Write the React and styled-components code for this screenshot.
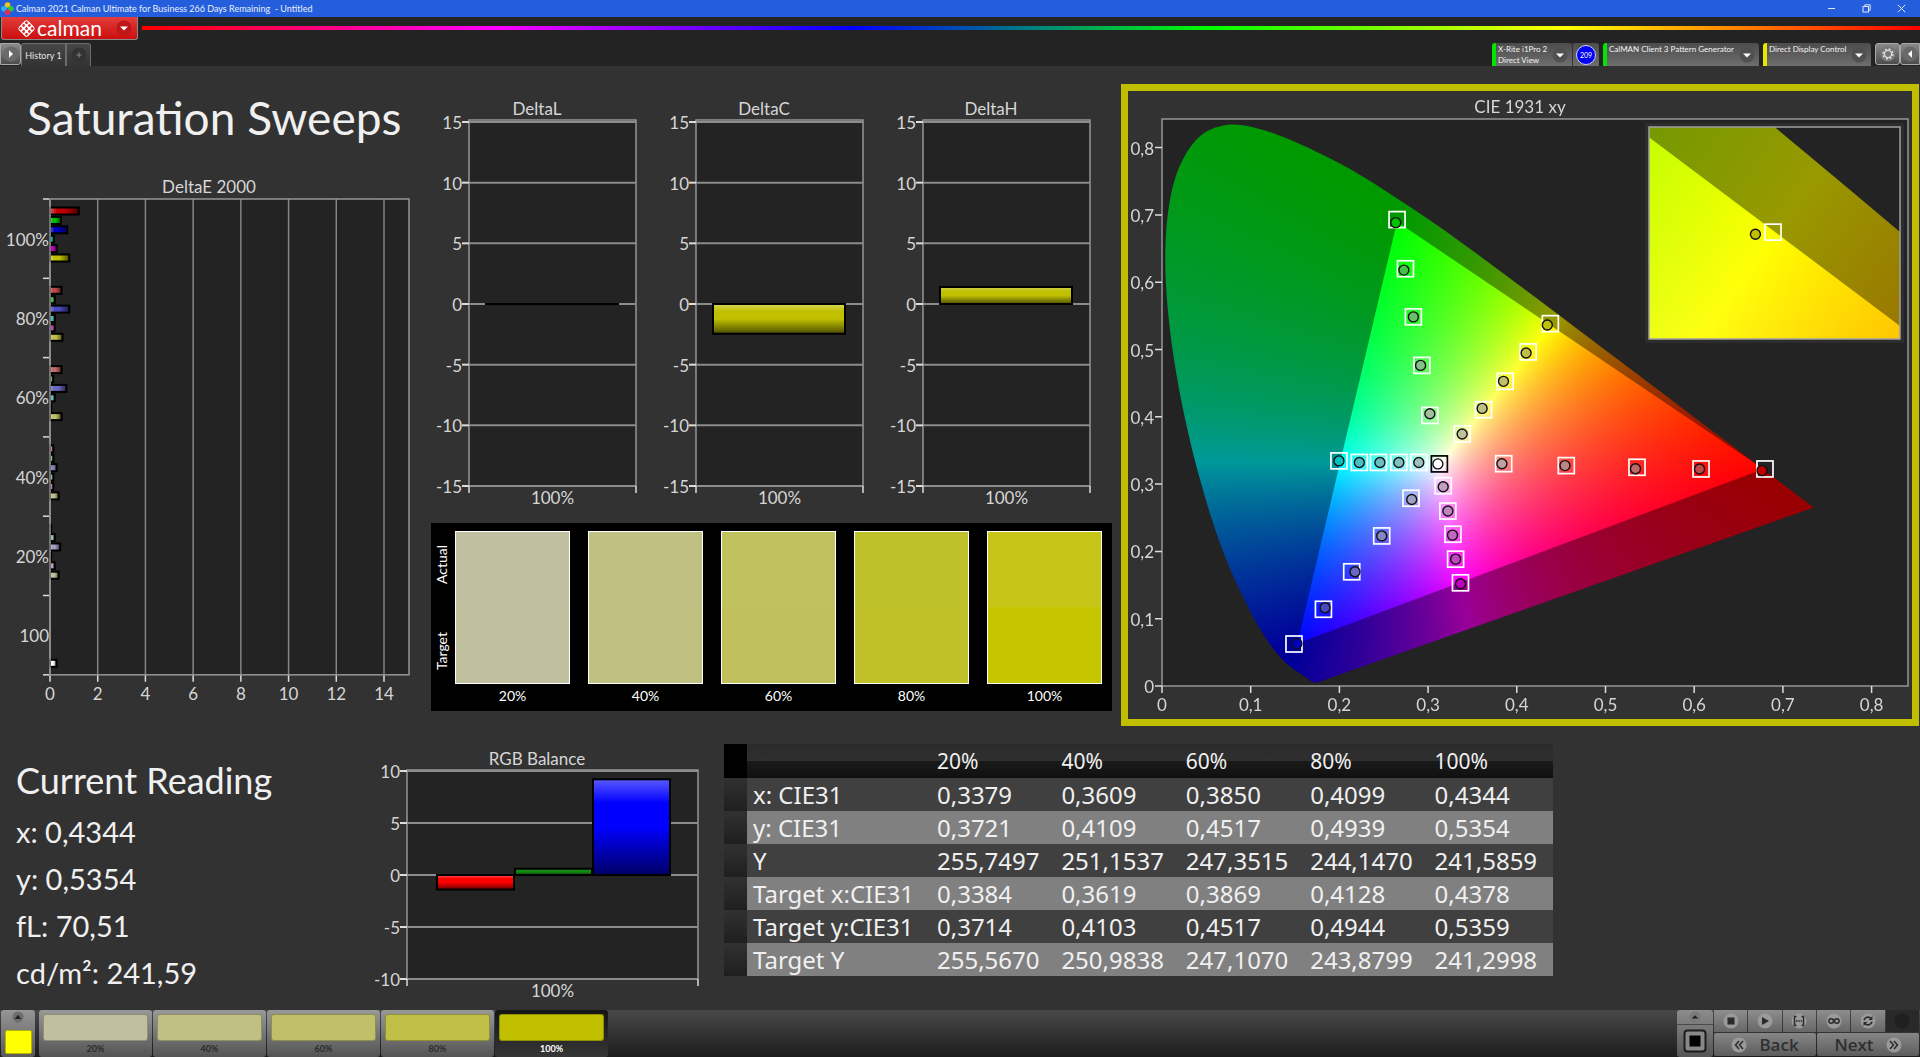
import React, { useLayoutEffect, useRef } from "react"
import styled, { createGlobalStyle } from "styled-components"

const GlobalStyle = createGlobalStyle`
  * {
    box-sizing: border-box;
  }
  body {
    margin: 0;
    background: #323232;
    color: #f0f0f0;
    font-family: Lato, "Liberation Sans", sans-serif;
  }
  button {
    margin: 0;
    padding: 0;
    border: none;
    background: none;
    color: inherit;
    font: inherit;
    cursor: pointer;
  }
`

/* ---------- data ---------- */

const LEVELS = ["20%", "40%", "60%", "80%", "100%"]
const PATCHES = ["#c0c0a0", "#c0c085", "#c0c068", "#c0c048", "#c0c000"]

const SWATCHES = [
  { label: "20%", actual: "#c0c0a0", target: "#c0c09f" },
  { label: "40%", actual: "#c0c083", target: "#c0c081" },
  { label: "60%", actual: "#c0c15f", target: "#c0c05d" },
  { label: "80%", actual: "#bfc12b", target: "#c0c128" },
  { label: "100%", actual: "#c6c518", target: "#c5c500" },
]

const TABLE_ROWS = [
  ["x: CIE31", "0,3379", "0,3609", "0,3850", "0,4099", "0,4344"],
  ["y: CIE31", "0,3721", "0,4109", "0,4517", "0,4939", "0,5354"],
  ["Y", "255,7497", "251,1537", "247,3515", "244,1470", "241,5859"],
  ["Target x:CIE31", "0,3384", "0,3619", "0,3869", "0,4128", "0,4378"],
  ["Target y:CIE31", "0,3714", "0,4103", "0,4517", "0,4944", "0,5359"],
  ["Target Y", "255,5670", "250,9838", "247,1070", "243,8799", "241,2998"],
]

const READINGS = ["x: 0,4344", "y: 0,5354", "fL: 70,51", "cd/m²: 241,59"]

const HUES = {
  red: [1, 0, 0],
  green: [0, 1, 0],
  blue: [0, 0, 1],
  cyan: [0, 1, 1],
  magenta: [1, 0, 1],
  yellow: [1, 1, 0],
}

// channel value of the absent primaries for 20% .. 100%
const LOW = [160, 133, 104, 72, 0]

const hueColor = (hue, level) =>
  `rgb(${HUES[hue].map((on) => (on ? 192 : LOW[level])).join(",")})`

// DeltaE per level, from 100% down to 20%, in the order of HUES
const DELTA_E = [
  { label: "100%", level: 4, values: [1.2, 0.46, 0.72, 0.16, 0.28, 0.8] },
  { label: "80%", level: 3, values: [0.48, 0.2, 0.8, 0.2, 0.2, 0.52] },
  { label: "60%", level: 2, values: [0.48, 0.13, 0.68, 0.2, 0.05, 0.48] },
  { label: "40%", level: 1, values: [0.14, 0.14, 0.28, 0.14, 0.14, 0.36] },
  { label: "20%", level: 0, values: [0.05, 0.2, 0.42, 0.05, 0.2, 0.36] },
]

// [target x, target y, actual x, actual y] for 20% .. 100%
const SWEEPS = {
  red: [
    [0.3852, 0.3303, 0.3832, 0.3303],
    [0.4558, 0.3275, 0.4543, 0.3275],
    [0.5355, 0.325, 0.5338, 0.3228],
    [0.6077, 0.3225, 0.606, 0.3225],
    [0.6798, 0.3225, 0.6765, 0.32],
  ],
  green: [
    [0.302, 0.402, 0.302, 0.4045],
    [0.293, 0.4764, 0.2915, 0.4764],
    [0.2834, 0.5485, 0.2834, 0.5485],
    [0.2745, 0.62, 0.2727, 0.618],
    [0.265, 0.693, 0.2635, 0.6885],
  ],
  blue: [
    [0.2807, 0.279, 0.2815, 0.2772],
    [0.2477, 0.223, 0.2477, 0.223],
    [0.2139, 0.1697, 0.2176, 0.1697],
    [0.182, 0.114, 0.1838, 0.1163],
    [0.1488, 0.0624, 0.152, 0.063],
  ],
  cyan: [
    [0.2895, 0.3322, 0.2895, 0.3322],
    [0.267, 0.3322, 0.267, 0.3322],
    [0.244, 0.3322, 0.2457, 0.3322],
    [0.2225, 0.3322, 0.2225, 0.3322],
    [0.1995, 0.3345, 0.1995, 0.3345],
  ],
  magenta: [
    [0.317, 0.2976, 0.317, 0.296],
    [0.3223, 0.26, 0.3223, 0.26],
    [0.328, 0.2255, 0.3275, 0.2242],
    [0.331, 0.1885, 0.331, 0.1885],
    [0.3365, 0.1533, 0.3365, 0.152],
  ],
  yellow: [
    [0.3384, 0.3745, 0.3384, 0.3745],
    [0.3625, 0.4105, 0.3609, 0.4125],
    [0.3869, 0.4527, 0.385, 0.4527],
    [0.4128, 0.4964, 0.4105, 0.4949],
    [0.4378, 0.5384, 0.4344, 0.5364],
  ],
}

const LOCUS = [
  [0.1741, 0.005], [0.1714, 0.0051], [0.1689, 0.0069], [0.1644, 0.0109],
  [0.1566, 0.0177], [0.144, 0.0297], [0.1355, 0.0399], [0.1241, 0.0578],
  [0.1096, 0.0868], [0.0913, 0.1327], [0.0687, 0.2007], [0.0454, 0.295],
  [0.0235, 0.4127], [0.0082, 0.5384], [0.0039, 0.6548], [0.0139, 0.7502],
  [0.0389, 0.812], [0.0743, 0.8338], [0.1142, 0.8262], [0.1547, 0.8059],
  [0.1929, 0.7816], [0.2296, 0.7543], [0.3016, 0.6923], [0.3731, 0.6245],
  [0.4441, 0.5547], [0.5125, 0.4866], [0.5752, 0.4242], [0.627, 0.3725],
  [0.6658, 0.334], [0.6915, 0.3083], [0.719, 0.2809], [0.7347, 0.2653],
]

const GAMUT = [[0.265, 0.69], [0.678, 0.3225], [0.1525, 0.063]]

/* ---------- page frame ---------- */

const Page = styled.div`
  display: flex;
  flex-direction: column;
  min-height: 100vh;
`

const TitleBar = styled.header`
  display: flex;
  align-items: center;
  justify-content: space-between;
  height: 17px;
  padding: 0 12px 0 1px;
  background: #245edc;
  color: #e9effc;
  font-size: 9px;
  line-height: 17px;
`

const TitleText = styled.div`
  display: flex;
  align-items: center;
  gap: 2px;
  white-space: pre;
`

const WindowButtons = styled.div`
  display: flex;
  gap: 21px;

  button {
    display: flex;
    width: 14px;
    height: 14px;
    align-items: center;
    justify-content: center;
  }
`

const BrandBar = styled.div`
  display: flex;
  align-items: flex-start;
  gap: 4px;
  height: 26px;
  padding-left: 1px;
  background: #232323;
`

const BrandButton = styled.button`
  display: flex;
  align-items: center;
  width: 137px;
  height: 23px;
  padding: 0 5px 0 15px;
  border: 1px solid #8a8a8a;
  border-top: none;
  border-radius: 0 0 3px 3px;
  background: linear-gradient(#e23c3c, #cc0e0e);
  color: #fff;
`

const BrandName = styled.span`
  flex: 1;
  padding-left: 1px;
  font-size: 21px;
  line-height: 18px;
  text-align: left;
`

const Spectrum = styled.div`
  flex: 1;
  height: 4px;
  margin-top: 9px;
  background: linear-gradient(90deg, #f00, #f0f, #00f, #0f0, #ff0, #f00);
`

const TabBar = styled.nav`
  display: flex;
  justify-content: space-between;
  height: 23px;
  background: #232323;
`

const TabGroup = styled.div`
  display: flex;
  align-items: stretch;
  gap: ${(p) => p.$gap}px;
`

const EdgeButton = styled.button`
  display: flex;
  align-items: center;
  justify-content: center;
  width: ${(p) => p.$width}px;
  height: 22px;
  border: 1px solid #a9a9a9;
  border-radius: ${(p) => p.$radius};
  background: linear-gradient(#8a8a8a, #4c4c4c);
`

const HistoryTab = styled.button`
  display: flex;
  align-items: center;
  justify-content: center;
  width: ${(p) => p.$width}px;
  border: 1px solid #6c6c6c;
  border-bottom: none;
  border-radius: ${(p) => p.$radius};
  background: linear-gradient(#474747, #333);
  color: #e4e4e4;
  font-size: 9px;
  white-space: nowrap;
`

const DeviceTab = styled.button`
  display: flex;
  align-items: flex-start;
  width: ${(p) => p.$width}px;
  padding: 1px 4px 0 2px;
  border-left: 4px solid ${(p) => p.$status};
  border-radius: 3px 3px 0 0;
  background: linear-gradient(#4c4c4c, #6e6e6e);
  color: #f4f4f4;
  font-size: 8px;
  line-height: 11px;
  text-align: left;
  white-space: nowrap;

  span {
    flex: 1;
  }
  svg {
    flex: none;
    align-self: center;
  }
`

const Meter = styled.div`
  display: flex;
`

const CountBadge = styled.div`
  display: flex;
  align-items: center;
  justify-content: center;
  width: 27px;
  border-left: 1px solid #333;
  border-radius: 0 3px 0 0;
  background: linear-gradient(#4c4c4c, #6e6e6e);

  span {
    width: 20px;
    height: 20px;
    border: 1px solid #cfd0ff;
    border-radius: 50%;
    background: #0000f5;
    color: #fff;
    font-size: 7px;
    line-height: 18px;
    text-align: center;
  }
`

/* ---------- workspace ---------- */

const Workspace = styled.main`
  flex: 1;
  background: #323232;
`

const TopRow = styled.section`
  display: grid;
  grid-template-columns: minmax(0, 431fr) minmax(0, 681fr) minmax(0, 808fr);
  align-items: start;
`

const BottomRow = styled.section`
  display: grid;
  grid-template-columns: minmax(0, 365fr) minmax(0, 359fr) minmax(0, 829fr) minmax(0, 367fr);
  align-items: start;
`

const PageTitle = styled.h1`
  margin: 0;
  padding: 22px 0 0 27px;
  height: 112px;
  font-size: 46px;
  font-weight: 400;
  line-height: 60px;
  white-space: nowrap;
`

const ChartSvg = styled.svg`
  display: block;
  width: 100%;
  height: auto;
  fill: #d6d6d6;
  font-family: Lato, "Liberation Sans", sans-serif;
  font-size: 17px;
`

const DeltaCharts = styled.div`
  display: grid;
  grid-template-columns: repeat(3, minmax(0, 1fr));
  padding-top: 32px;
`

const SwatchPanel = styled.div`
  display: grid;
  grid-template-columns: 24px minmax(0, 1fr);
  height: 188px;
  padding: 8px 10px 0 0;
  background: #000;
  color: #fff;
  font-size: 14px;
`

const SideLabels = styled.div`
  display: flex;
  flex-direction: column;
  justify-content: space-between;
  height: 153px;
  padding: 14px 0 14px 2px;
`

const SideLabel = styled.span`
  width: 17px;
  line-height: 17px;
  writing-mode: vertical-rl;
  transform: rotate(180deg);
`

const SwatchList = styled.div`
  display: grid;
  grid-template-columns: repeat(5, minmax(0, 1fr));
  gap: 18px;
`

const Swatch = styled.figure`
  margin: 0;
  text-align: center;

  figcaption {
    line-height: 24px;
  }
`

const SwatchFill = styled.div`
  height: 153px;
  border: 1px solid #fff;
  background: linear-gradient(${(p) => p.$actual} 50%, ${(p) => p.$target} 50%);
`

const CiePanel = styled.div`
  display: grid;
  margin: 18px 1px 0 9px;
  border: 7px solid #bfbf00;

  > * {
    grid-area: 1 / 1;
  }
`

const CieCanvas = styled.canvas`
  display: block;
  width: 100%;
  height: auto;
`

const Readings = styled.div`
  padding: 31px 0 0 16px;
`

const ReadingTitle = styled.h2`
  margin: 0 0 4px;
  font-size: 36px;
  font-weight: 400;
  line-height: 47px;
`

const Reading = styled.p`
  margin: 0;
  font-size: 29px;
  line-height: 47px;
`

const ResultTable = styled.table`
  width: 100%;
  margin-top: 18px;
  border-collapse: collapse;
  table-layout: fixed;
  font: 24px/30px "Noto Sans", "Open Sans", sans-serif;

  th,
  td {
    padding: 0 0 0 6px;
    font-weight: 400;
    text-align: left;
    white-space: nowrap;
  }
`

const HeadRow = styled.tr`
  height: 34px;
  background: linear-gradient(#2b2b2b, #2f2f2f 49%, #1a1a1a 51%, #101010);
  font-size: 21px;

  td {
    background: #000;
  }
`

const BodyRow = styled.tr`
  height: 33px;
  background: ${(p) => (p.$odd ? "#808080" : "#404040")};

  td:first-child {
    background: linear-gradient(#313131, #1f1f1f);
  }
`

/* ---------- bottom bar ---------- */

const BottomBar = styled.footer`
  display: flex;
  justify-content: space-between;
  height: 47px;
  background: linear-gradient(#484848, #1d1d1d);
`

const PatchStrip = styled.div`
  display: flex;
  gap: 1px;
  padding-left: 1px;
`

const HomePatch = styled.button`
  display: flex;
  flex-direction: column;
  align-items: center;
  justify-content: space-between;
  width: 34px;
  margin-right: 3px;
  padding: 1px 0 3px;
  border-radius: 3px;
  background: linear-gradient(#969696, #5a5a5a);

  i {
    width: 27px;
    height: 24px;
    border: 1px solid #b3b300;
    border-radius: 2px;
    background: #ff0;
  }
`

const PatchButton = styled.button`
  width: 113px;
  padding: 4px 4px 0;
  border-radius: 3px;
  background: ${(p) => (p.$active ? "linear-gradient(#151515, #363636)" : "linear-gradient(#989898, #545454)")};
  color: ${(p) => (p.$active ? "#fff" : "#2b2b2b")};
  font-size: 9px;
  font-weight: 700;
  line-height: 16px;

  i {
    display: block;
    height: 27px;
    border: 1px solid rgba(0, 0, 0, 0.25);
    border-radius: 3px;
    background: ${(p) => p.$color};
  }
`

const Transport = styled.div`
  display: flex;
  gap: 1px;
  padding-right: 1px;
`

const StopPanel = styled.div`
  display: flex;
  flex-direction: column;
  width: 36px;
  border-radius: 3px;
  background: linear-gradient(#8c8c8c, #555);

  button {
    display: flex;
    align-items: center;
    justify-content: center;
  }
  button:first-child {
    height: 15px;
    border-bottom: 1px solid #4a4a4a;
  }
  button:last-child {
    flex: 1;
  }
`

const TransportRows = styled.div`
  display: grid;
  grid-template-rows: 22px 23px;
  row-gap: 1px;
  width: 205px;
`

const TransportRow = styled.div`
  display: grid;
  grid-template-columns: repeat(${(p) => p.$count}, 1fr);
  gap: 1px;
`

const TransportButton = styled.button`
  display: flex;
  align-items: center;
  justify-content: center;
  background: ${(p) => (p.$off ? "#292929" : "linear-gradient(#8e8e8e, #666)")};
`

const StepButton = styled.button`
  display: flex;
  align-items: center;
  justify-content: center;
  gap: 12px;
  border-radius: 2px;
  background: linear-gradient(#868686, #5c5c5c);
  color: #303030;
  font: 600 17px/22px "Open Sans", "Noto Sans", sans-serif;
`

/* ---------- icons ---------- */

const RoundIcon = ({ children, size = 16, bg = "#9a9a9a" }) => (
  <svg width={size} height={size} viewBox="0 0 16 16" aria-hidden="true">
    <circle cx="8" cy="8" r="7.5" fill={bg} />
    {children}
  </svg>
)

const CaretDown = ({ bg = "#505050" }) => (
  <RoundIcon bg={bg}>
    <path d="M4 6.5h8L8 10.5z" fill="#fff" />
  </RoundIcon>
)

const AppIcon = () => (
  <svg width="13" height="13" viewBox="0 0 13 13" aria-hidden="true">
    <circle cx="6.5" cy="3" r="2.8" fill="#f0c419" />
    <circle cx="3" cy="6.7" r="2.8" fill="#28b4f0" />
    <circle cx="10" cy="6.7" r="2.8" fill="#35c43c" />
    <circle cx="6.5" cy="10.2" r="2.8" fill="#e02c5c" />
  </svg>
)

const BrandIcon = () => (
  <svg width="19" height="19" viewBox="0 0 19 19" aria-hidden="true">
    <g transform="rotate(45 9.5 9.5)">
      <rect x="3" y="3" width="13" height="13" rx="2.5" fill="#fff" />
      {[5.4, 9.5, 13.6].map((cx) =>
        [5.4, 9.5, 13.6].map((cy) => <circle key={`${cx}-${cy}`} cx={cx} cy={cy} r="1.4" fill="#d52626" />)
      )}
    </g>
  </svg>
)

const GearIcon = () => (
  <RoundIcon bg="#777">
    <circle cx="8" cy="8" r="3.6" fill="none" stroke="#ddd" strokeWidth="1.3" />
    <circle cx="8" cy="8" r="4.9" fill="none" stroke="#ddd" strokeWidth="1.6" strokeDasharray="1.9 1.95" />
  </RoundIcon>
)

/* ---------- charts ---------- */

const Shade = ({ id, horizontal }) => (
  <linearGradient id={id} x2={horizontal ? 1 : 0} y2={horizontal ? 0 : 1}>
    <stop offset="0" stopColor="#fff" stopOpacity="0.35" />
    <stop offset="0.25" stopColor="#fff" stopOpacity="0" />
    <stop offset="0.5" stopColor="#000" stopOpacity="0" />
    <stop offset="1" stopColor="#000" stopOpacity="0.6" />
  </linearGradient>
)

const Bar = ({ x, y, width, height, color, shade }) => (
  <>
    <rect x={x} y={y} width={width} height={height} fill={color} />
    <rect x={x} y={y} width={width} height={height} fill={`url(#${shade})`} stroke="#000" strokeWidth="2" />
  </>
)

const DeltaEChart = () => {
  const left = 50
  const top = 21
  const unit = 24
  const group = 79.3
  const bottom = top + group * 6
  const slot = 9.4
  const groups = [...DELTA_E, { label: "100", values: [] }]
  return (
    <ChartSvg viewBox="0 0 431 547" role="img" aria-label="DeltaE 2000">
      <defs>
        <Shade id="shade-e" horizontal />
      </defs>
      <text x="209" y="15" textAnchor="middle">DeltaE 2000</text>
      <rect x={left} y={top} width="359" height={bottom - top} fill="#232323" />
      {[0, 2, 4, 6, 8, 10, 12, 14].map((v) => {
        const x = left + (v * 334) / 14
        return (
          <g key={v}>
            <path d={`M${x} ${top}V${bottom}`} stroke="#858585" strokeWidth="1.5" />
            <path d={`M${x} ${bottom}v7`} stroke="#dcdcdc" strokeWidth="1.5" />
            <text x={x} y={bottom + 25} textAnchor="middle">{v}</text>
          </g>
        )
      })}
      {groups.map((g, i) => (
        <g key={g.label}>
          <text x="49" y={top + group * (i + 0.5) + 7} textAnchor="end">{g.label}</text>
          {g.values.map((v, j) => (
            <Bar
              key={j}
              x={left}
              y={top + group * i + 8.5 + slot * j}
              width={v * unit}
              height="7"
              color={hueColor(Object.keys(HUES)[j], g.level)}
              shade="shade-e"
            />
          ))}
        </g>
      ))}
      <Bar x={left} y={bottom - 15} width="6.5" height="7" color="#fff" shade="shade-e" />
      {[0, 1, 2, 3, 4, 5, 6].map((i) => (
        <path key={i} d={`M43 ${top + group * i}h6`} stroke="#dcdcdc" strokeWidth="1.5" />
      ))}
      <rect x={left} y={top} width="359" height={bottom - top} fill="none" stroke="#969696" strokeWidth="1.5" />
    </ChartSvg>
  )
}

const BarChart = ({ title, id, width, height, left, right, top, zero, bottom, titleX, titleY, max, bars }) => {
  const unit = (bottom - zero) / max
  const steps = []
  for (let v = max; v >= -max; v -= 5) steps.push(v)
  return (
    <ChartSvg viewBox={`0 0 ${width} ${height}`} role="img" aria-label={title}>
      <defs>
        <Shade id={id} />
      </defs>
      <text x={titleX} y={titleY} textAnchor="middle">{title}</text>
      <rect x={left} y={top} width={right - left} height={bottom - top} fill="#232323" stroke="#969696" strokeWidth="1.5" />
      {steps.map((v) => {
        const y = zero - v * unit
        return (
          <g key={v}>
            <path d={`M${left} ${y}H${right}`} stroke="#8c8c8c" strokeWidth="2" />
            <path d={`M${left - 7} ${y}h7`} stroke="#dcdcdc" strokeWidth="2" />
            <text x={left - 7} y={y + 7} textAnchor="end">{v}</text>
          </g>
        )
      })}
      <path d={`M${left} ${bottom}v7M${right} ${bottom}v7`} stroke="#dcdcdc" strokeWidth="1.5" />
      {bars.map((b) => (
        <Bar
          key={b.x}
          x={b.x}
          y={b.value > 0 ? zero - b.value * unit : zero}
          width={b.width}
          height={Math.max(0.1, Math.abs(b.value) * unit)}
          color={b.color}
          shade={id}
        />
      ))}
      <text x={(left + right) / 2} y={bottom + 18} textAnchor="middle">100%</text>
    </ChartSvg>
  )
}

const DeltaChart = ({ title, value }) => (
  <BarChart
    title={title}
    id={`shade-${title}`}
    width={227}
    height={425}
    left={38}
    right={205}
    top={22}
    zero={206}
    bottom={388}
    titleX={106}
    titleY={17}
    max={15}
    bars={[{ x: 55, width: 132, value, color: "#c0c000" }]}
  />
)

/* ---------- CIE diagram ---------- */

const CIE_W = 784
const CIE_H = 628
const MAIN = { left: 34, top: 28, width: 746, height: 567, x0: 34, y0: 595, sx: 887, sy: 673 }
const INSET = { left: 521, top: 36, width: 251, height: 212, x0: 646.5 - 0.4378 * 5020, y0: 142 + 0.5359 * 4240, sx: 5020, sy: 4240 }

const toX = (view, x) => view.x0 + x * view.sx
const toY = (view, y) => view.y0 - y * view.sy

const xyToRgb = (x, y) => {
  const z = 1 - x - y
  const rgb = [
    2.4935 * x - 0.9314 * y - 0.4027 * z,
    -0.8295 * x + 1.7627 * y + 0.0236 * z,
    0.0358 * x - 0.0762 * y + 0.9569 * z,
  ].map((c) => Math.max(0, c))
  const peak = Math.max(...rgb)
  return rgb.map((c) => c / peak)
}

const paintLayer = (view, gain) => {
  const layer = document.createElement("canvas")
  layer.width = view.width
  layer.height = view.height
  const ctx = layer.getContext("2d")
  const image = ctx.createImageData(view.width, view.height)
  for (let j = 0; j < view.height; j++) {
    for (let i = 0; i < view.width; i++) {
      const x = (view.left + i - view.x0) / view.sx
      const y = (view.y0 - view.top - j) / view.sy
      const rgb = xyToRgb(x, y)
      const at = (j * view.width + i) * 4
      image.data[at] = rgb[0] * gain
      image.data[at + 1] = rgb[1] * gain
      image.data[at + 2] = rgb[2] * gain
      image.data[at + 3] = 255
    }
  }
  ctx.putImageData(image, 0, 0)
  return layer
}

const traceLocus = (ctx, view) => {
  const pts = LOCUS.map(([x, y]) => [toX(view, x), toY(view, y)])
  ctx.beginPath()
  ctx.moveTo(...pts[0])
  for (let i = 0; i < pts.length - 1; i++) {
    const p0 = pts[Math.max(0, i - 1)]
    const p1 = pts[i]
    const p2 = pts[i + 1]
    const p3 = pts[Math.min(pts.length - 1, i + 2)]
    ctx.bezierCurveTo(
      p1[0] + (p2[0] - p0[0]) / 6, p1[1] + (p2[1] - p0[1]) / 6,
      p2[0] - (p3[0] - p1[0]) / 6, p2[1] - (p3[1] - p1[1]) / 6,
      p2[0], p2[1]
    )
  }
  ctx.closePath()
}

const paintView = (ctx, view) => {
  ctx.save()
  ctx.fillStyle = "#232323"
  ctx.fillRect(view.left, view.top, view.width, view.height)
  ctx.beginPath()
  ctx.rect(view.left, view.top, view.width, view.height)
  ctx.clip()
  traceLocus(ctx, view)
  ctx.clip()
  ctx.drawImage(paintLayer(view, 153), view.left, view.top)
  ctx.beginPath()
  GAMUT.forEach(([x, y]) => ctx.lineTo(toX(view, x), toY(view, y)))
  ctx.closePath()
  ctx.clip()
  ctx.drawImage(paintLayer(view, 255), view.left, view.top)
  ctx.restore()
}

const TargetBox = ({ x, y, color = "#fff" }) => (
  <rect x={x - 8} y={y - 8} width="16" height="16" fill="none" stroke={color} strokeWidth="1.7" />
)

const ActualDot = ({ x, y, color }) => (
  <circle cx={x} cy={y} r="5" fill={color} stroke="#111" strokeWidth="1.4" />
)

const CieChart = () => {
  const canvas = useRef(null)

  useLayoutEffect(() => {
    const ctx = canvas.current.getContext("2d")
    ctx.clearRect(0, 0, CIE_W, CIE_H)
    paintView(ctx, MAIN)
    ctx.fillStyle = "#2d2d2d"
    ctx.fillRect(INSET.left - 4, INSET.top - 4, INSET.width + 8, INSET.height + 8)
    paintView(ctx, INSET)
  }, [])

  const bottom = MAIN.top + MAIN.height
  return (
    <CiePanel>
      <CieCanvas ref={canvas} width={CIE_W} height={CIE_H} />
      <ChartSvg viewBox={`0 0 ${CIE_W} ${CIE_H}`} role="img" aria-label="CIE 1931 xy">
        <text x="392" y="22" textAnchor="middle">CIE 1931 xy</text>
        <rect x={MAIN.left} y={MAIN.top} width={MAIN.width} height={MAIN.height} fill="none" stroke="#969696" strokeWidth="1.5" />
        {[0, 1, 2, 3, 4, 5, 6, 7, 8].map((n) => {
          const label = n ? `0,${n}` : "0"
          const x = toX(MAIN, n / 10)
          const y = toY(MAIN, n / 10)
          return (
            <g key={n}>
              <path d={`M${x} ${bottom}v7M${MAIN.left - 7} ${y}h7`} stroke="#dcdcdc" strokeWidth="1.5" />
              <text x={x} y={bottom + 25} textAnchor="middle">{label}</text>
              <text x={MAIN.left - 8} y={y + 7} textAnchor="end">{label}</text>
            </g>
          )
        })}
        {Object.keys(SWEEPS).map((hue) =>
          SWEEPS[hue].map(([tx, ty, ax, ay], level) => (
            <g key={`${hue}${level}`}>
              <TargetBox x={toX(MAIN, tx)} y={toY(MAIN, ty)} />
              <ActualDot x={toX(MAIN, ax)} y={toY(MAIN, ay)} color={hueColor(hue, level)} />
            </g>
          ))
        )}
        <TargetBox x={toX(MAIN, 0.3127)} y={toY(MAIN, 0.33)} color="#000" />
        <ActualDot x={toX(MAIN, 0.311)} y={toY(MAIN, 0.33)} color="#fff" />
        <rect x={INSET.left} y={INSET.top} width={INSET.width} height={INSET.height} fill="none" stroke="#a0a0a0" strokeWidth="1.5" />
        <TargetBox x={toX(INSET, 0.4375)} y={toY(INSET, 0.5361)} />
        <ActualDot x={toX(INSET, 0.434)} y={toY(INSET, 0.5356)} color="#c0c000" />
      </ChartSvg>
    </CiePanel>
  )
}

/* ---------- sections ---------- */

const Header = () => (
  <>
    <TitleBar>
      <TitleText>
        <AppIcon />
        {"Calman 2021 Calman Ultimate for Business 266 Days Remaining  - Untitled"}
      </TitleText>
      <WindowButtons>
        <button aria-label="Minimize">
          <svg width="9" height="9" viewBox="0 0 9 9"><path d="M1 4.5h7" stroke="#dfe8fb" /></svg>
        </button>
        <button aria-label="Restore">
          <svg width="9" height="9" viewBox="0 0 9 9" fill="none" stroke="#dfe8fb">
            <rect x="1" y="2.5" width="5.5" height="5.5" />
            <path d="M2.8 2.2V.8h5.4v5.4H6.8" />
          </svg>
        </button>
        <button aria-label="Close">
          <svg width="9" height="9" viewBox="0 0 9 9"><path d="M.8.8l7.4 7.4M8.2.8L.8 8.2" stroke="#dfe8fb" /></svg>
        </button>
      </WindowButtons>
    </TitleBar>
    <BrandBar>
      <BrandButton>
        <BrandIcon />
        <BrandName>calman</BrandName>
        <CaretDown bg="#bd1717" />
      </BrandButton>
      <Spectrum />
    </BrandBar>
    <TabBar>
      <TabGroup $gap={0}>
        <EdgeButton $width={21} $radius="0 3px 3px 0" aria-label="Expand left panel">
          <RoundIcon bg="#6a6a6a"><path d="M6 4.2v7.6L10 8z" fill="#fff" /></RoundIcon>
        </EdgeButton>
        <HistoryTab $width={45} $radius="3px 0 0 0">History 1</HistoryTab>
        <HistoryTab $width={25} $radius="0 3px 0 0" aria-label="Add history">
          <RoundIcon bg="#333"><path d="M8 5.5v5M5.5 8h5" stroke="#888" /></RoundIcon>
        </HistoryTab>
      </TabGroup>
      <TabGroup $gap={4}>
        <Meter>
          <DeviceTab $width={80} $status="#00e600">
            <span>X-Rite i1Pro 2<br />Direct View</span>
            <CaretDown />
          </DeviceTab>
          <CountBadge><span>209</span></CountBadge>
        </Meter>
        <DeviceTab $width={156} $status="#00e600">
          <span>CalMAN Client 3 Pattern Generator</span>
          <CaretDown />
        </DeviceTab>
        <DeviceTab $width={108} $status="#e6e600">
          <span>Direct Display Control</span>
          <CaretDown />
        </DeviceTab>
        <TabGroup $gap={0}>
          <EdgeButton $width={25} $radius="3px" aria-label="Settings"><GearIcon /></EdgeButton>
          <EdgeButton $width={20} $radius="3px 0 0 3px" aria-label="Expand right panel">
            <RoundIcon bg="#6a6a6a"><path d="M10 4.2v7.6L6 8z" fill="#fff" /></RoundIcon>
          </EdgeButton>
        </TabGroup>
      </TabGroup>
    </TabBar>
  </>
)

const Results = () => (
  <ResultTable>
    <colgroup>
      <col width="23" />
      <col width="184" />
      {LEVELS.map((level) => <col key={level} />)}
    </colgroup>
    <thead>
      <HeadRow>
        <td />
        <th />
        {LEVELS.map((level) => <th key={level} scope="col">{level}</th>)}
      </HeadRow>
    </thead>
    <tbody>
      {TABLE_ROWS.map(([label, ...values], i) => (
        <BodyRow key={label} $odd={i % 2 === 1}>
          <td />
          <th scope="row">{label}</th>
          {values.map((v, j) => <td key={j}>{v}</td>)}
        </BodyRow>
      ))}
    </tbody>
  </ResultTable>
)

const Footer = () => (
  <BottomBar>
    <PatchStrip>
      <HomePatch aria-label="Current patch">
        <RoundIcon size={12} bg="#6e6e6e"><path d="M3.5 10.5h9L8 5z" fill="#222" /></RoundIcon>
        <i />
      </HomePatch>
      {LEVELS.map((level, i) => (
        <PatchButton key={level} $color={PATCHES[i]} $active={i === 4}>
          <i />
          {level}
        </PatchButton>
      ))}
    </PatchStrip>
    <Transport>
      <StopPanel>
        <button aria-label="Expand">
          <RoundIcon size={12} bg="#7a7a7a"><path d="M3.5 10h9L8 5.5z" fill="#222" /></RoundIcon>
        </button>
        <button aria-label="Stop reading">
          <svg width="24" height="24" viewBox="0 0 24 24">
            <rect x="1.5" y="1.5" width="21" height="21" rx="3" fill="#888" stroke="#1c1c1c" strokeWidth="2" />
            <rect x="6.5" y="6.5" width="11" height="11" fill="#000" />
          </svg>
        </button>
      </StopPanel>
      <TransportRows>
        <TransportRow $count={6}>
          <TransportButton aria-label="Stop">
            <RoundIcon><rect x="4.5" y="4.5" width="7" height="7" fill="#2a2a2a" /></RoundIcon>
          </TransportButton>
          <TransportButton aria-label="Play">
            <RoundIcon><path d="M5 4v8l7-4z" fill="#2a2a2a" /></RoundIcon>
          </TransportButton>
          <TransportButton aria-label="Read series">
            <RoundIcon>
              <path d="M5.5 3.5h-2v9h2M10.5 3.5h2v9h-2" fill="none" stroke="#2a2a2a" strokeWidth="1.5" />
              <path d="M5 8h6" stroke="#2a2a2a" strokeWidth="1.6" strokeDasharray="1.5 0.8" />
            </RoundIcon>
          </TransportButton>
          <TransportButton aria-label="Read continuously">
            <RoundIcon>
              <circle cx="5.2" cy="8" r="2.3" fill="none" stroke="#2a2a2a" strokeWidth="1.5" />
              <circle cx="10.8" cy="8" r="2.3" fill="none" stroke="#2a2a2a" strokeWidth="1.5" />
            </RoundIcon>
          </TransportButton>
          <TransportButton aria-label="Repeat">
            <RoundIcon>
              <path d="M4 7.2a4 4 0 0 1 7-1.6M12 8.8a4 4 0 0 1-7 1.6" fill="none" stroke="#2a2a2a" strokeWidth="1.6" />
              <path d="M12.5 3v4h-4zM3.5 13V9h4z" fill="#2a2a2a" />
            </RoundIcon>
          </TransportButton>
          <TransportButton $off aria-label="Idle">
            <RoundIcon bg="#202020" />
          </TransportButton>
        </TransportRow>
        <TransportRow $count={2}>
          <StepButton>
            <RoundIcon><path d="M8 4L4.5 8 8 12M12 4L8.5 8l3.5 4" fill="none" stroke="#2a2a2a" strokeWidth="1.5" /></RoundIcon>
            Back
          </StepButton>
          <StepButton>
            Next
            <RoundIcon><path d="M4 4l3.5 4L4 12M8 4l3.5 4L8 12" fill="none" stroke="#2a2a2a" strokeWidth="1.5" /></RoundIcon>
          </StepButton>
        </TransportRow>
      </TransportRows>
    </Transport>
  </BottomBar>
)

const App = () => (
  <Page>
    <GlobalStyle />
    <Header />
    <Workspace>
      <TopRow>
        <div>
          <PageTitle>Saturation Sweeps</PageTitle>
          <DeltaEChart />
        </div>
        <div>
          <DeltaCharts>
            <DeltaChart title="DeltaL" value={0} />
            <DeltaChart title="DeltaC" value={-2.45} />
            <DeltaChart title="DeltaH" value={1.4} />
          </DeltaCharts>
          <SwatchPanel>
            <SideLabels>
              <SideLabel>Actual</SideLabel>
              <SideLabel>Target</SideLabel>
            </SideLabels>
            <SwatchList>
              {SWATCHES.map((s) => (
                <Swatch key={s.label}>
                  <SwatchFill $actual={s.actual} $target={s.target} />
                  <figcaption>{s.label}</figcaption>
                </Swatch>
              ))}
            </SwatchList>
          </SwatchPanel>
        </div>
        <CieChart />
      </TopRow>
      <BottomRow>
        <Readings>
          <ReadingTitle>Current Reading</ReadingTitle>
          {READINGS.map((r) => <Reading key={r}>{r}</Reading>)}
        </Readings>
        <BarChart
          title="RGB Balance"
          id="shade-rgb"
          width={359}
          height={284}
          left={42}
          right={333}
          top={44}
          zero={149}
          bottom={253}
          titleX={172}
          titleY={39}
          max={10}
          bars={[
            { x: 72, width: 77, value: -1.4, color: "#ff0000" },
            { x: 150, width: 77, value: 0.6, color: "#128a12" },
            { x: 228, width: 77, value: 9.2, color: "#0000ff" },
          ]}
        />
        <Results />
      </BottomRow>
    </Workspace>
    <Footer />
  </Page>
)

export default App
